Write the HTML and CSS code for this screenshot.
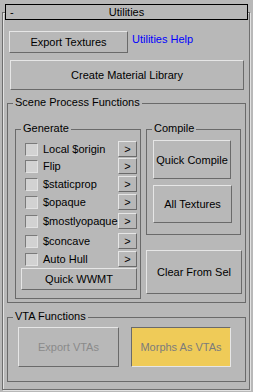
FILE: index.html
```html
<!DOCTYPE html>
<html>

<head>
    <title>Utilities</title>
    <link rel="stylesheet" href="styles.css">
</head>

<body>
    <div class="rollout">
        <div class="rollout-title">
            <span class="rollout-toggle">-</span>
            <span class="rollout-name">Utilities</span>
        </div>

        <div class="top-row">
            <button class="btn btn-export">Export Textures</button>
            <a class="help-link" href="#">Utilities Help</a>
        </div>
        <button class="btn btn-matlib">Create Material Library</button>

        <!-- Scene process -->
        <div class="group group-scene">
            <span class="group-label">Scene Process Functions</span>
            <div class="scene-cols">
                <div class="group group-generate">
                    <span class="group-label">Generate</span>
                    <div class="gen-row">
                        <span class="check"></span><span class="gen-text">Local $origin</span>
                        <button class="btn btn-arrow">&gt;</button>
                    </div>
                    <div class="gen-row gap-1">
                        <span class="check"></span><span class="gen-text">Flip</span>
                        <button class="btn btn-arrow">&gt;</button>
                    </div>
                    <div class="gen-row gap-2">
                        <span class="check"></span><span class="gen-text">$staticprop</span>
                        <button class="btn btn-arrow">&gt;</button>
                    </div>
                    <div class="gen-row gap-2">
                        <span class="check"></span><span class="gen-text">$opaque</span>
                        <button class="btn btn-arrow">&gt;</button>
                    </div>
                    <div class="gen-row gap-3">
                        <span class="check"></span><span class="gen-text">$mostlyopaque</span>
                        <button class="btn btn-arrow">&gt;</button>
                    </div>
                    <div class="gen-row gap-4">
                        <span class="check"></span><span class="gen-text">$concave</span>
                        <button class="btn btn-arrow">&gt;</button>
                    </div>
                    <div class="gen-row gap-2">
                        <span class="check"></span><span class="gen-text">Auto Hull</span>
                        <button class="btn btn-arrow">&gt;</button>
                    </div>
                    <button class="btn btn-wwmt">Quick WWMT</button>
                </div>

                <div class="right-col">
                    <div class="group group-compile">
                        <span class="group-label">Compile</span>
                        <button class="btn btn-quick">Quick Compile</button>
                        <button class="btn btn-alltex">All Textures</button>
                    </div>
                    <button class="btn btn-clear">Clear From Sel</button>
                </div>
            </div>
        </div>

        <!-- VTA -->
        <div class="group group-vta">
            <span class="group-label">VTA Functions</span>
            <div class="vta-row">
                <button class="btn btn-vta" disabled>Export VTAs</button>
                <button class="btn btn-vta btn-checked">Morphs As VTAs</button>
            </div>
        </div>
    </div>
</body>

</html>
```

FILE: styles.css
```css
/* Basic styling */
body {
    margin: 0;
    width: 253px;
    height: 392px;
    background: #b8b8b8;
    font-family: "Liberation Sans", Arial, sans-serif;
    font-size: 11px;
    color: #000;
    overflow: hidden;
}

/* Rollout frame */
.rollout {
    box-sizing: border-box;
    margin: 12px 0 0 2px;
    width: 248px;
    height: 378px;
    border: 1px solid #6e6e6e;
    box-shadow: 1px 1px 0 #e2e2e2, inset 1px 1px 0 #e2e2e2;
}

.rollout-title {
    box-sizing: border-box;
    display: flex;
    margin: -9px 0 0 2px;
    width: 243px;
    height: 16px;
    border: 1px solid #000;
    background: #b8b8b8;
    line-height: 14px;
}

.rollout-toggle {
    width: 14px;
    padding-left: 4px;
    box-sizing: border-box;
}

.rollout-name {
    flex: 1;
    text-align: center;
    margin-right: 14px;
}

/* Buttons */
.btn {
    box-sizing: border-box;
    display: block;
    margin: 0;
    padding: 0;
    font: inherit;
    color: #000;
    background: #b8b8b8;
    border: 1px solid;
    border-color: #e6e6e6 #6a6a6a #6a6a6a #e6e6e6;
    text-align: center;
}

.btn:disabled {
    color: #8a8a8a;
}

.btn-checked {
    background: #efcb58;
    color: #7c7c7c;
    border-color: #6a6a6a #e6e6e6 #e6e6e6 #6a6a6a;
}

.top-row {
    display: flex;
    margin: 11px 0 0 6px;
}

.btn-export {
    width: 119px;
    height: 22px;
}

.help-link {
    margin: 1px 0 0 4px;
    color: #0000ff;
    text-decoration: none;
    line-height: 14px;
}

.btn-matlib {
    margin: 7px 0 0 7px;
    width: 234px;
    height: 30px;
}

/* Group boxes */
.group {
    position: relative;
    box-sizing: border-box;
    border: 1px solid #6a6a6a;
}

.group-label {
    position: absolute;
    top: -8px;
    left: 5px;
    padding: 0 2px;
    line-height: 13px;
    background: #b8b8b8;
    white-space: nowrap;
}

.group-scene {
    margin: 13px 0 0 4px;
    width: 239px;
    height: 200px;
}

.scene-cols {
    display: flex;
    gap: 5px;
    margin: 25px 0 0 7px;
}

.group-generate {
    width: 126px;
    height: 170px;
    padding: 11px 3px 0 9px;
}

.gen-row {
    display: flex;
    align-items: center;
    height: 16px;
}

.gap-1 { margin-top: 1px; }
.gap-2 { margin-top: 2px; }
.gap-3 { margin-top: 3px; }
.gap-4 { margin-top: 4px; }

.check {
    box-sizing: border-box;
    width: 13px;
    height: 13px;
    margin-right: 5px;
    background: #d2d2d2;
    border: 1px solid;
    border-color: #7a7a7a #e2e2e2 #e2e2e2 #7a7a7a;
}

.gen-text {
    flex: 1;
    white-space: nowrap;
}

.btn-arrow {
    width: 19px;
    height: 16px;
    line-height: 13px;
}

.btn-wwmt {
    margin: 1px 0 0 -4px;
    width: 116px;
    height: 22px;
}

.right-col {
    display: flex;
    flex-direction: column;
}

.group-compile {
    width: 95px;
    height: 106px;
    padding: 10px 0 0 6px;
}

.btn-quick {
    width: 78px;
    height: 39px;
}

.btn-alltex {
    margin-top: 6px;
    width: 79px;
    height: 38px;
}

.btn-clear {
    margin-top: 15px;
    width: 96px;
    height: 44px;
}

/* VTA */
.group-vta {
    margin: 14px 0 0 4px;
    width: 239px;
    height: 65px;
}

.vta-row {
    display: flex;
    gap: 12px;
    margin: 9px 0 0 10px;
}

.btn-vta {
    width: 101px;
    height: 40px;
}

.btn-vta.btn-checked {
    width: 100px;
}
```
